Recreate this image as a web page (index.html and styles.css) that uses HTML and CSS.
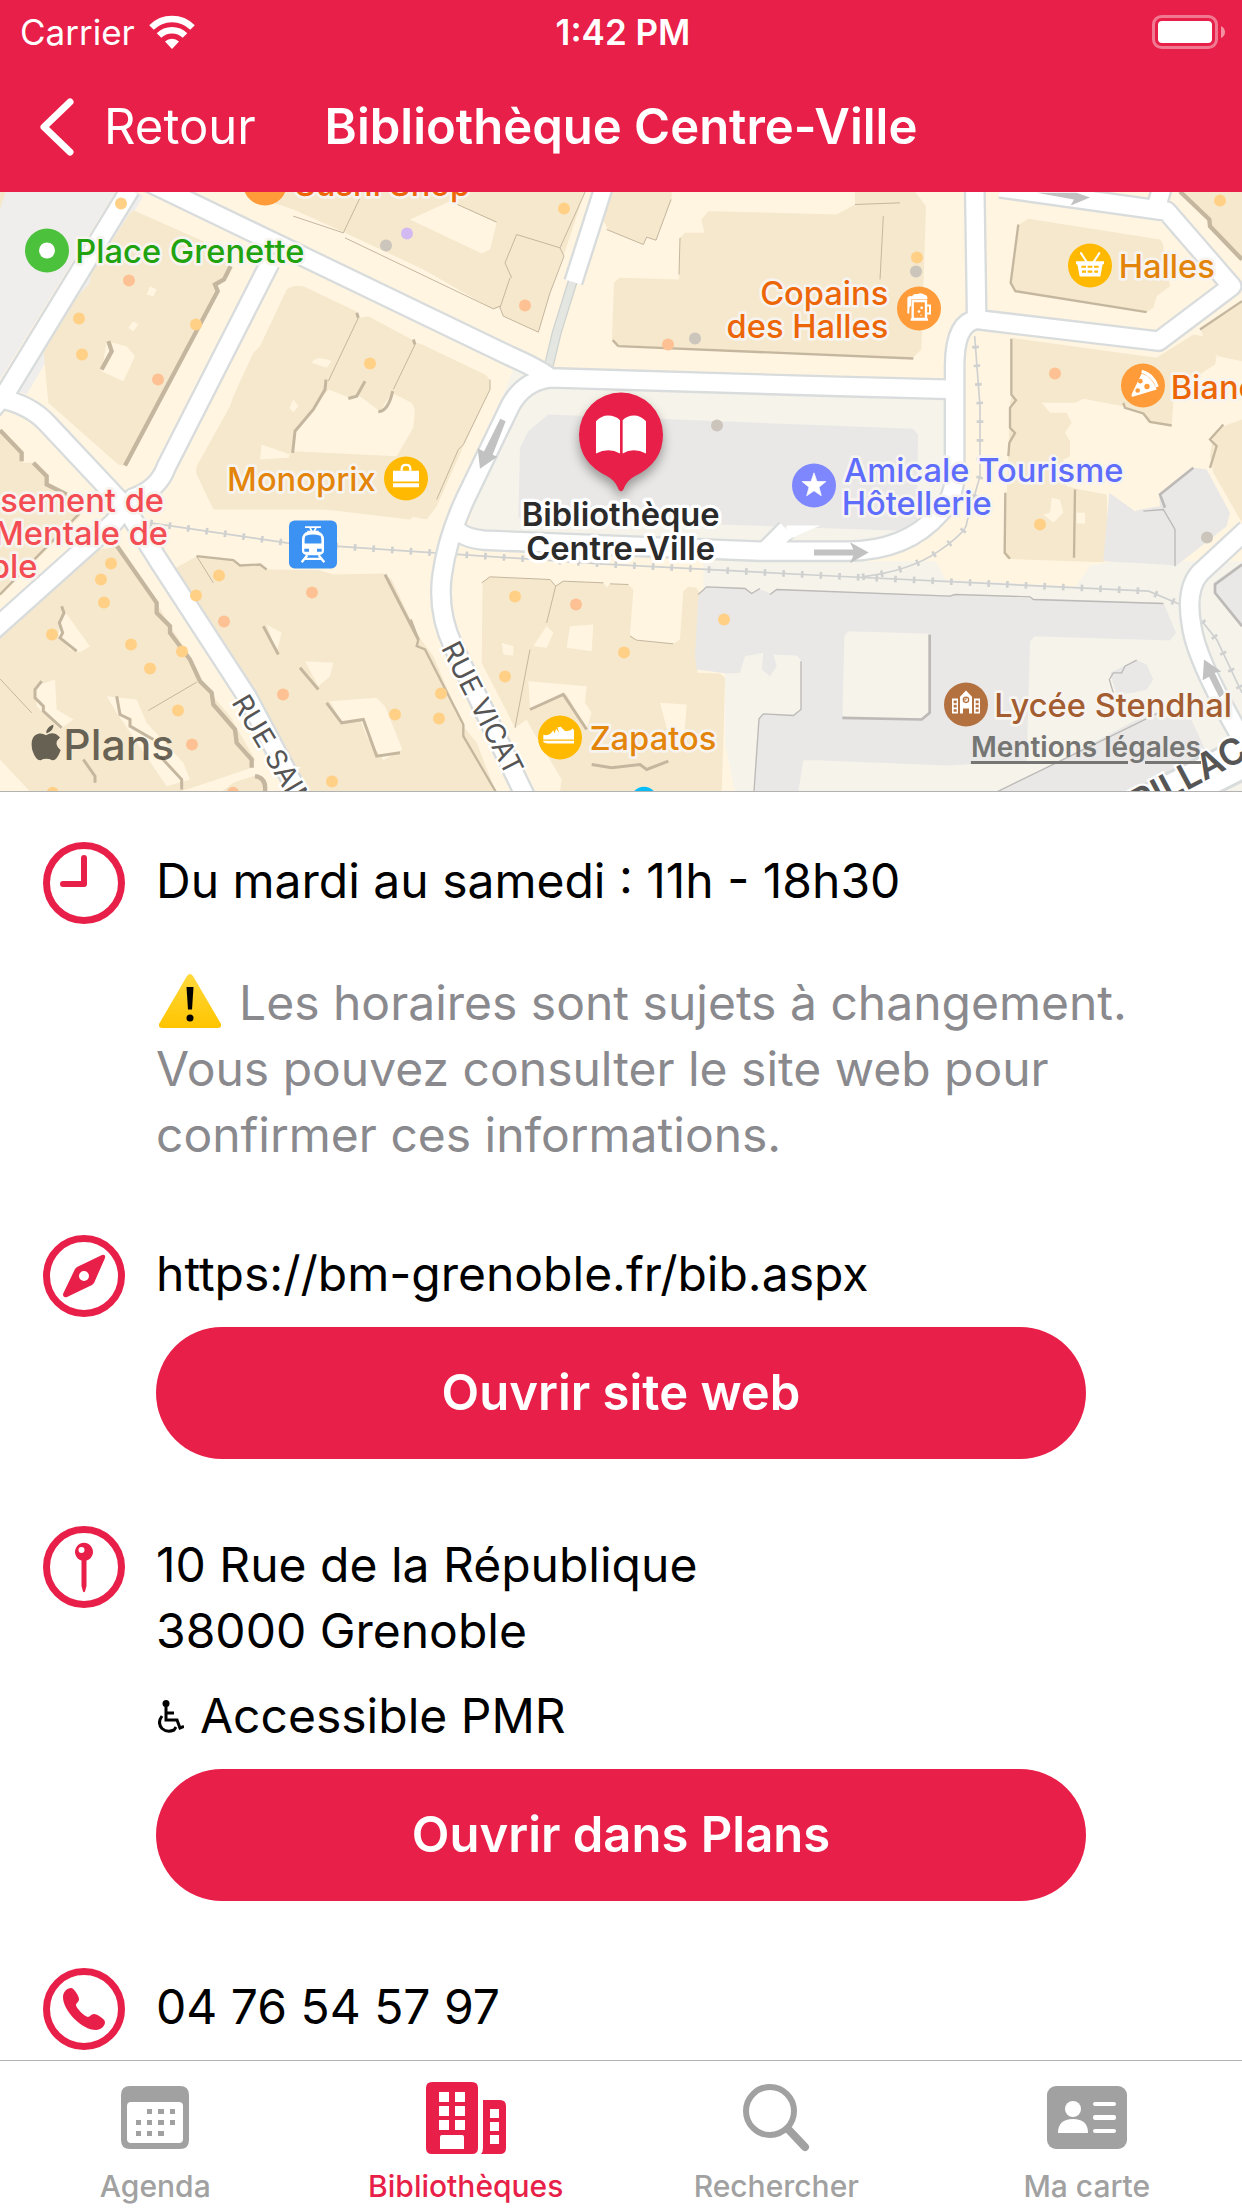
FILE: index.html
```html
<!DOCTYPE html>
<html lang="fr">
<head>
<meta charset="utf-8">
<meta name="viewport" content="width=device-width, initial-scale=1">
<title>Bibliothèque Centre-Ville</title>
<link rel="stylesheet" href="styles.css">
</head>
<body>
<header class="top">
  <div class="status">
    <div class="carrier">Carrier
      <svg class="wifi" viewBox="0 0 46 34" aria-hidden="true"><g fill="none" stroke="#fff" stroke-width="6.5"><path d="M2.500 12.500a29 29 0 0 1 41 0"/><path d="M10 20.500a18.500 18.500 0 0 1 26 0"/></g><path d="M16 26.500a10 10 0 0 1 14 0L23 34z" fill="#fff"/></svg>
    </div>
    <div class="time">1:42 PM</div>
    <svg class="battery" viewBox="0 0 74 34" aria-hidden="true"><rect x="1.500" y="1.500" width="63" height="31" rx="8" fill="none" stroke="#fff" stroke-opacity=".4" stroke-width="3"/><rect x="6" y="6" width="54" height="22" rx="4" fill="#fff"/><path d="M69 11q4 2 4 6t-4 6z" fill="#fff" fill-opacity=".5"/></svg>
  </div>
  <div class="navbar">
    <button class="back" type="button"><svg viewBox="0 0 34 58" aria-hidden="true"><path d="M30 4 4 29l26 25" fill="none" stroke="#fff" stroke-width="7" stroke-linecap="round" stroke-linejoin="round"/></svg>Retour</button>
    <h1>Bibliothèque Centre-Ville</h1>
  </div>
</header>
<main>
  <div class="map">
    <svg class="tiles" viewBox="0 6 3726 1800" preserveAspectRatio="xMidYMid slice" role="img" aria-label="Plan du quartier">
      <rect width="3726" height="1810" fill="#fff5e1"/>
      <!-- squares and campus ground -->
      <path d="M0 0H350L0 570z" fill="#efeeed"/><path d="M0 0H20L0 60z" fill="#f5e8cd"/>
      <path d="M430 20 80 615 40 600 400 0z" fill="#efeeec"/>
      <path d="M1540 540 2836 625V1000L2700 1090 1400 1030 1500 640z" fill="#f5f3ea"/>
      <path d="M2110 1115H3726V1810H2205L2175 1660V1450L2110 1400z" fill="#f5f3ea"/>
      <path d="M2790 1080 2836 1170 3226 1192 3270 1128 3640 1066 3680 1120 3726 1060V600H2870V950z" fill="#fff5e1"/>
      <!-- buildings -->
      <g fill="#f5e8cd">
        <path d="M400 62 610 155 695 230 670 272 645 285 655 305 380 830 355 825 145 640 130 480 165 400 205 370 215 340 270 280 275 235 345 140 390 70z"/>
        <path d="M860 300Q880 285 910 290L1068 365 1080 385 1105 380 1235 450 1245 470 1260 465V900H1230L1120 960H640L588 850 590 830 690 650 700 620 760 490 780 470z"/>
        <path d="M0 720 65 790 70 820 100 820 140 860 145 885 250 940 240 980 0 1220z"/>
        <path d="M820 40 880 60 1035 130 1270 240 1480 360 1500 355 1510 380 1615 428 1650 310 1690 200 1700 170 1756 0H850z"/>
        <path d="M1230 300V460L1260 462 1455 555Q1475 570 1470 600L1390 770 1310 950 1280 990 1230 980z"/>
        <path d="M1820 0H2015V30L1968 152 1940 143 1930 165 1825 122 1812 95z"/>
        <path d="M2125 65 2510 75 2565 45V0H2740L2778 50 2764 480 2736 507 1850 470 1836 450 1842 280 1858 265 2037 270 2040 145 2055 130 2113 130 2104 90z"/>
        <path d="M3085 88 3480 150Q3495 165 3490 200L3510 290 3470 320 3460 355 3440 368 3046 305 3030 285 3058 105z"/>
        <path d="M3540 6 3625 90 3640 120 3726 210V0H3540z"/>
        <path d="M3036 445 3250 475 3470 505 3580 435 3610 440 3650 500 3645 525 3560 580 3520 640 3515 710 3445 700 3430 675 3370 650 3250 628 3225 640 3125 640 3150 670H3200L3215 700 3195 730 3210 755V800L3190 810 3200 890 3240 900 3320 915 3325 1090 3310 1118 3020 1108 3012 1090 3025 800 3030 640 3036 620z"/>
        <path d="M3726 335 3600 415 3620 470 3655 500 3726 515z"/><path d="M3726 690 3670 710 3640 740 3630 800 3640 850 3726 1000z"/>
        <path d="M590 1100 700 1112 720 1125 780 1125 800 1140 960 1142 1000 1155 1150 1152 1175 1170 1255 1340 1300 1400 1390 1610 1430 1660 1487 1806H890L700 1510 510 1145z"/>
        <path d="M350 1070 470 1240 510 1310 550 1370 600 1475 690 1580 730 1650 765 1710 755 1735 590 1790 540 1806H90L0 1710V1330L160 1180 250 1090z"/>
        <path d="M640 920 1230 990 1260 960V830H640L610 900z"/><path d="M700 1780 765 1758 795 1780V1810H660z"/>
        <path d="M1465 1162 1650 1170 1667 1190 1685 1175 1810 1180 1820 1195 1830 1183 1885 1185 1900 1200 1890 1335 1910 1352 2020 1363 2040 1350 2050 1205 2065 1192 2090 1195 2100 1215 2092 1450 2160 1452 2175 1465 2170 1660 2165 1806H1680L1685 1770 1590 1610 1580 1590 1690 1515 1545 1615 1445 1420 1448 1180z"/>
      </g>
      <!-- courtyards -->
      <g fill="#fff5e1">
        <path d="M985 600 1050 625 1080 620 1140 665 1175 610 1235 640 1245 660 1240 715 1190 800 880 785 885 725z"/>
        <path d="M320 455 380 470 405 500 370 575 305 545z"/><path d="M450 290 470 300 460 320 440 315zM400 395 415 405 400 425 385 415zM935 520Q950 495 995 515L980 535zM880 630 895 650 880 668 868 655zM785 765 870 795 865 805 780 810z"/>
        <path d="M1230 90 1350 35 1490 100 1470 180 1445 192z"/>
        <path d="M190 1260 270 1370 240 1388 210 1380 175 1335zM105 1490 165 1470 170 1560 220 1590 180 1620 110 1550zM320 1520 410 1530 440 1600 550 1720 570 1770 500 1790 350 1570z"/>
        <path d="M915 1415 1000 1420 990 1460 955 1490zM990 1535 1130 1525 1155 1550 1207 1680 1150 1712 1100 1640 1080 1590 1025 1600zM800 1305 845 1330 830 1390z"/>
        <path d="M1600 1370 1640 1310 1660 1330 1640 1375zM1710 1310 1780 1305 1775 1385 1700 1375zM1585 1475 1760 1490 1755 1540 1775 1570 1760 1620 1700 1515 1590 1560zM1980 1540 2060 1545 2050 1680 2020 1690zM1505 1360 1540 1370V1398L1510 1395z"/>
        <path d="M3155 925 3180 930 3190 970 3160 1000 3130 975 3150 970zM3230 970H3255V1002H3230z"/>
      </g>
      <!-- campus buildings -->
      <g fill="#e9e8e6">
        <path d="M1645 675 2740 718 2754 735 2750 1025 2600 1020 2300 1010 1555 985 1560 775 1585 725z"/>
        <path d="M2120 1192 2235 1197 2255 1212 2275 1197 2310 1212 2330 1200 3490 1240 3528 1330 3510 1353 3105 1340 3090 1355 3080 1715 2840 1728 2450 1712H2410L2395 1806H2262L2277 1588 2290 1573 2380 1578 2403 1560V1412L2390 1398 2320 1395 2330 1430 2310 1460 2285 1440 2290 1390 2235 1400 2220 1450 2180 1452 2090 1440 2085 1400 2095 1220z"/>
        <path d="M3000 1806 3450 1570 3560 1560 3620 1690 3400 1806z"/>
        <path d="M3726 1120 3640 1180 3650 1215 3726 1310z"/>
        <path d="M3328 910 3405 965 3420 960 3480 950 3478 920 3580 835 3620 840 3690 970 3680 1010 3530 1128 3440 1122 3310 1115z"/>
        <path d="M3330 1450 3370 1430 3410 1412 3440 1425 3460 1470 3440 1500 3400 1510 3350 1515z"/>
      </g>
      <path d="M2545 1325 2790 1333 2788 1575 2765 1590 2527 1585 2533 1340z" fill="#f5f3ea"/>
      <!-- shaded walls -->
      <g fill="none" stroke="#c5b79f" stroke-width="13">
        <path d="M692 230 672 270 645 285 653 305 375 828M325 455 335 485 305 540M0 722 65 790V815M100 820 140 860V885L200 915M350 1068 470 1240V1270L510 1310V1330L570 1410 600 1475 635 1510 640 1545 705 1620 710 1660 755 1710 755 1735M765 1760Q800 1765 795 1806M3540 6 3628 90 3630 110 3726 210"/>
        <path stroke-width="9" d="M978 570 975 600 940 660 885 725 878 790M185 1250 192 1270 178 1300 188 1330 180 1345 230 1385M125 1475 105 1500 105 1525 130 1550V1565L185 1615M350 1520 360 1575 390 1590V1610L460 1650M250 1710 285 1760V1780M480 1700 545 1770V1800M1155 1155 1255 1350M980 1540 1025 1600 1090 1590 1130 1700 1200 1690M900 1435 955 1500M790 1310 835 1395M1590 1560 1690 1515 1760 1620M1775 1725 1835 1735 1920 1725 1940 1740 2005 1715M1095 575 1070 620 1045 627M1178 605Q1165 665 1135 667M1240 450 1245 465M1070 370 1075 385"/>
        <path stroke-width="7" d="M0 1215 240 970M3034 448V615L3048 632 3030 655V715L3045 730 3028 760 3025 800M3016 910 3014 1090 3030 1108M3225 900 3222 1105M3600 420 3726 335M3370 640 3375 655 3430 672 3450 697 3515 708M3670 705 3630 750 3650 770 3630 835M590 1100 700 1112 720 1128 780 1125 800 1140M1855 470 2740 507M1855 470 1838 452M3055 105 3032 280 3046 305 3440 368M1232 1290 1255 1350 1250 1370 1275 1380 1390 1605 1390 1640 1487 1806"/>
        <path stroke-width="3" d="M1350 35 1490 98M880 80 1030 130 1080 25M1035 145 1480 358 1500 350M1530 265 1500 355 1510 380 1615 428 1650 310M1550 135 1515 220 1535 265M1550 135 1680 175 1692 200 1650 310M1680 175 1756 6M1470 570V600L1390 765 1375 780 1310 930M1820 120 1930 165 1940 143 1968 152 2013 30M2040 145 2037 255M2565 45 2700 40M2650 80 2640 270M1445 1180 1470 1162 1650 1170 1667 1190 1640 1300M1667 1190 1690 1175 1810 1180M1830 1183 1885 1185M1890 1340 1910 1352 2020 1363M1545 1615 1590 1380M445 1563 590 1478M0 1468 95 1570M590 1100 640 1180M1075 385 985 575M1245 465 1180 600"/>
      </g>
      <g fill="none" stroke="#bcb9b7" stroke-width="4">
        <path d="M2095 1215 2120 1192 2235 1197 2255 1212 2280 1197M2310 1215 2330 1200 2850 1220 2865 1215 3090 1222 3100 1230 3490 1242M2262 1806 2277 1588 2290 1573 2380 1578 2403 1560V1415"/>
        <path stroke-width="8" d="M2789 1335V1570L2765 1590 2527 1585M3726 1125 3645 1185V1210L3726 1310M3580 835 3480 915 3495 955"/><path d="M2985 1810 3480 1568M3525 1130V1020L3490 960 3430 965M3340 1510 3328 1470 3340 1450 3365 1450 3375 1430 3410 1412"/>
      </g>
      <!-- tram rails -->
      <g fill="none" stroke="#cfd0d0">
        <g stroke-width="5"><path id="rail" d="M450 1000 860 1060 1260 1087 1800 1123 2466 1158 3446 1205 3541 1245"/><path id="spur" d="M2586 1162Q2730 1145 2816 1085T2900 1000L2940 860V650L2924 440"/><path id="east" d="M3606 1295 3650 1350 3726 1510"/></g>
        <g stroke-width="20" stroke-dasharray="8 48"><use href="#rail"/><use href="#spur"/><use href="#east"/></g>
      </g>
      <!-- streets -->
      <defs>
        <g id="streets" fill="none" stroke-linejoin="round">
          <path d="M390 0 15 615-60 700M-40 620Q80 635 140 700L370 945 480 1120 740 1520 905 1830M810 220 500 830Q475 900 400 925L340 1000-40 1340M430-30 1530 500Q1620 540 1650 565L2490 590 2870 600M1650 565Q1570 575 1530 650L1395 930Q1340 1050 1326 1160T1360 1370L1590 1850M1370 1020Q1390 1045 1450 1052L2280 1085H2540Q2720 1085 2820 970 2864 920 2864 860V530Q2864 400 2930 390M2924-20 2930 390 3476 455 3695 290 3500 65 3000-5M3470 50 3490-20"/>
          <path d="M3740 1020 3600 1150Q3555 1200 3575 1310 3590 1420 3750 1690M2300 1080 2360 1020"/>
        </g>
      </defs>
      <path d="M1720 270 1670 430 1645 535" fill="none" stroke="#d0d4d0" stroke-width="30"/><path d="M1720 270 1670 430 1645 535" fill="none" stroke="#e3e6e1" stroke-width="22"/>
      <path d="M1812-10 1720 278" stroke="#d9dcdc" stroke-width="62"/>
      <use href="#streets" stroke="#d9dcdc" stroke-width="66"/>
      <path d="M3780 1680 3300 1920" stroke="#d9dcdc" stroke-width="130"/>
      <path d="M1812-10 1720 278" stroke="#fff" stroke-width="48"/>
      <use href="#streets" stroke="#fff" stroke-width="52"/>
      <path d="M3780 1680 3300 1920" stroke="#fff" stroke-width="112"/>
      <path d="M2360 1020V1008H2460L2360 1052z" fill="#fff"/>
      <g fill="#c2c2c2"><path d="M1501 688 1517 695 1478 796 1492 802 1440 838 1433 776 1452 786z"/><path d="M2442 1080H2560L2550 1058 2606 1089 2550 1121 2560 1098H2442z"/><path d="M3110 10H3230L3270 24 3212 48 3222 30z"/><path d="M3612 1410 3664 1446 3644 1450 3674 1512 3658 1524 3627 1462 3608 1472z"/></g>
      <!-- minor places -->
      <g fill="#ffd086"><circle cx="363" cy="42" r="18"/><circle cx="237" cy="387" r="18"/><circle cx="246" cy="495" r="18"/><circle cx="588" cy="405" r="18"/><circle cx="1110" cy="522" r="18"/><circle cx="1692" cy="57" r="18"/><circle cx="2751" cy="204" r="18"/><circle cx="3660" cy="33" r="18"/><circle cx="333" cy="1122" r="18"/><circle cx="303" cy="1170" r="18"/><circle cx="312" cy="1239" r="18"/><circle cx="156" cy="1335" r="18"/><circle cx="393" cy="1365" r="18"/><circle cx="546" cy="1386" r="18"/><circle cx="450" cy="1437" r="18"/><circle cx="534" cy="1563" r="18"/><circle cx="657" cy="1158" r="18"/><circle cx="588" cy="1218" r="18"/><circle cx="1185" cy="1575" r="18"/><circle cx="996" cy="1776" r="18"/><circle cx="158" cy="1810" r="18"/><circle cx="1545" cy="1221" r="18"/><circle cx="1515" cy="1461" r="18"/><circle cx="1872" cy="1389" r="18"/><circle cx="2172" cy="1290" r="18"/><circle cx="1323" cy="1512" r="18"/><circle cx="1317" cy="1587" r="18"/><circle cx="3120" cy="1005" r="18"/></g>
      <g fill="#fdc193"><circle cx="387" cy="273" r="18"/><circle cx="474" cy="570" r="18"/><circle cx="1575" cy="348" r="18"/><circle cx="2004" cy="465" r="18"/><circle cx="3165" cy="552" r="18"/><circle cx="936" cy="1209" r="18"/><circle cx="672" cy="1296" r="18"/><circle cx="849" cy="1515" r="18"/><circle cx="576" cy="1665" r="18"/><circle cx="699" cy="1810" r="18"/><circle cx="1728" cy="1245" r="18"/></g>
      <g fill="#cbc5bc"><circle cx="1158" cy="168" r="18"/><circle cx="2085" cy="447" r="18"/><circle cx="2748" cy="246" r="18"/><circle cx="2151" cy="708" r="18"/><circle cx="3621" cy="1044" r="18"/></g>
      <circle cx="1221" cy="132" r="18" fill="#d3b9f2"/><circle cx="1932" cy="1832" r="40" fill="#06bdf8"/>
      <!-- street names -->
      <g class="street"><text transform="translate(693 1538) rotate(59)">RUE SAINT</text><text transform="translate(1322 1375) rotate(63)">RUE VICAT</text><text class="major" transform="translate(3416 1880) rotate(-28)">RILLAC</text></g>
      <!-- named places -->
      <g class="place">
        <circle cx="141" cy="183" r="66" fill="#4bc13c"/><circle cx="141" cy="183" r="24" fill="#fff"/>
        <text x="226" y="220" fill="#21a30f">Place Grenette</text>
        <circle cx="795" cy="-18" r="66" fill="#ff9b38"/><text x="884" y="20" fill="#ec6608">Sushi Shop</text>
        <text class="end" x="1127" y="903" fill="#e3840b">Monoprix</text>
        <circle cx="1218" cy="867" r="66" fill="#ffb900"/><path d="M1179 844H1257V876H1179zM1179 881H1257V893H1179z" fill="#fff"/><path d="M1205 844v-6q0-12 13-12t13 12v6" fill="none" stroke="#fff" stroke-width="7"/>
        <text class="end" x="2665" y="347" fill="#ec6608">Copains</text><text class="end" x="2665" y="446" fill="#ec6608">des Halles</text>
        <circle cx="2757" cy="357" r="66" fill="#ff9b38"/>
        <path d="M2738 335H2778V388H2738z" fill="none" stroke="#fff" stroke-width="7"/><path d="M2781 348h9v24h-9" fill="none" stroke="#fff" stroke-width="6"/><path d="M2722 372V328Q2722 318 2736 320 2740 312 2752 314 2764 308 2774 316 2784 318 2782 330H2733V350Q2727 348 2728 372zM2732 387H2784V394H2732z" fill="#fff"/><g fill="#fff"><circle cx="2765" cy="355" r="4"/><circle cx="2757" cy="366" r="4"/><circle cx="2763" cy="377" r="2"/></g>
        <circle cx="3270" cy="228" r="66" fill="#ffb900"/><path d="M3228 215H3312V224H3308L3301 261H3239L3232 224H3228z" fill="#fff"/><path d="M3243 191 3260 217M3298 191 3281 217" stroke="#fff" stroke-width="6" stroke-linecap="round"/><path d="M3244 229h14v6h-14zm19 0h14v6h-14zm19 0h14v6h-14zm-36 14h12v7h-12zm17 0h14v7h-14zm20 0h11v7h-11z" fill="#ffb900"/>
        <text x="3356" y="265" fill="#e3840b">Halles</text>
        <circle cx="3429" cy="588" r="66" fill="#ff9b38"/><path d="M3425 552Q3456 562 3470 600L3398 622Q3392 622 3396 612zM3426 541Q3464 551 3476 590L3468 594Q3457 562 3424 550z" fill="#fff"/><g fill="#ff9b38"><circle cx="3413" cy="603" r="7"/><circle cx="3441" cy="591" r="8"/><circle cx="3421" cy="575" r="7"/></g>
        <text x="3512" y="628" fill="#ec6608">Bianco</text>
        <circle cx="2442" cy="888" r="66" fill="#7e87fe"/><path d="m2442 850 9 26h27l-21 17 7 26-22-15-22 15 7-26-21-17h27z" fill="#fff" stroke="#fff" stroke-width="2"/>
        <text x="2532" y="878" fill="#5f6dfd">Amicale Tourisme</text><text x="2525" y="977" fill="#5f6dfd">Hôtellerie</text>
        <text class="end" x="492" y="967" fill="#f34d53">sement de</text><text class="end" x="504" y="1066" fill="#f34d53">Mentale de</text><text class="end" x="112" y="1165" fill="#f34d53">ble</text>
        <rect x="867" y="993" width="144" height="144" rx="17" fill="#3b92f2"/><path d="M915 1013h48M922 1026h34M930 1015l6 11M948 1015l-6 11" stroke="#fff" stroke-width="5"/><path d="M925 1025H953Q972 1030 972 1050V1083Q972 1096 955 1097H923Q906 1096 906 1083V1050Q906 1030 925 1025zM917 1039Q913 1044 914 1062H964Q965 1044 961 1039 939 1031 917 1039zM913 1078v9h14v-9zm38 0v9h14v-9z" fill="#fff" fill-rule="evenodd"/><path d="M922 1097 905 1118M956 1097 973 1118M916 1108H962" stroke="#fff" stroke-width="7"/>
        <text x="1769" y="1680" fill="#e3840b">Zapatos</text><circle cx="1680" cy="1644" r="66" fill="#ffb900"/><path d="M1630 1636Q1642 1640 1652 1632L1660 1622 1664 1632 1668 1618 1678 1630 1672 1614 1682 1612 1694 1624Q1712 1626 1718 1616L1722 1622V1650H1630zM1629 1654H1722V1662H1645Q1630 1662 1629 1654z" fill="#fff"/>
        <text x="2983" y="1582" fill="#a35d31">Lycée Stendhal</text><circle cx="2898" cy="1545" r="66" fill="#b47140"/><path d="M2856 1527H2874V1572H2856zM2922 1527H2940V1572H2922zM2880 1572V1522L2898 1503 2916 1522V1572H2907V1557H2889V1572z" fill="#fff"/><path d="M2861 1533h9v8h-9zm0 13h9v8h-9zm0 13h9v8h-9zM2927 1533h9v8h-9zm0 13h9v8h-9zm0 13h9v8h-9z" fill="#b47140"/><circle cx="2898" cy="1531" r="8" fill="#fff" stroke="#b47140" stroke-width="4"/><path d="M2898 1525v6h-6" fill="none" stroke="#b47140" stroke-width="3"/>
      </g>
      <!-- selected library -->
      <g class="library">
        <path class="pin" d="M1863 905Q1857 905 1853 893 1844 872 1822 860 1737 820 1737 735A126 126 0 0 1 1989 735Q1989 820 1904 860 1882 872 1873 893 1869 905 1863 905z" fill="#e81f48"/>
        <path d="M1788 695Q1804 678 1824 678 1846 678 1860 692V792Q1826 772 1788 792zM1938 695Q1922 678 1902 678 1882 678 1868 692V792Q1900 772 1938 792z" fill="#fff"/>
        <text x="1862" y="1010">Bibliothèque</text><text x="1862" y="1110">Centre-Ville</text>
      </g>
      <g class="brand"><path d="M160 705Q163 722 139 732 137 714 160 705zM138 737Q162 722 180 744 158 762 182 782 170 814 157 812 138 804 122 812 108 814 97 782 88 738 118 732 128 731 138 737z" transform="translate(0 900)"/><text x="190" y="1710">Plans</text></g>
    </svg>
    <a class="legal" href="#mentions">Mentions légales</a>
  </div>
  <div class="details">
    <section class="row">
      <svg class="badge" viewBox="0 0 82 82" aria-hidden="true"><circle cx="41" cy="41" r="37.500"/><path d="M41 16V42H20" stroke-width="6"/></svg>
      <div class="info">
        <p>Du mardi au samedi : 11h - 18h30</p>
        <p class="note"><svg class="warn" viewBox="0 0 62 54" role="img" aria-label="Attention"><defs><linearGradient id="w" x2="0" y2="1"><stop stop-color="#ffd93b"/><stop offset="1" stop-color="#ffc400"/></linearGradient></defs><path d="M28 2q3-4 6 0l28 48q1 4-3 4H3q-4 0-3-4z" fill="url(#w)"/><path d="M27.500 13h7L33 35.500h-4z"/><circle cx="31" cy="44" r="3.500"/></svg>Les horaires sont sujets à changement. Vous pouvez consulter le site web pour confirmer ces informations.</p>
      </div>
    </section>
    <section class="row">
      <svg class="badge" viewBox="0 0 82 82" aria-hidden="true"><circle cx="41" cy="41" r="37.500"/><path class="solid" fill-rule="evenodd" d="M59 20q4-1 3 3L51 48 49 50 24 62q-4 1-4-3L32 34 34 32zM41 36a5 5 0 1 0 0 10 5 5 0 0 0 0-10z"/></svg>
      <div class="info">
        <p>https://bm-grenoble.fr/bib.aspx</p>
        <button class="action" type="button">Ouvrir site web</button>
      </div>
    </section>
    <section class="row">
      <svg class="badge" viewBox="0 0 82 82" aria-hidden="true"><circle cx="41" cy="41" r="37.500"/><path class="solid" fill-rule="evenodd" d="M38.500 34.500A9 9 0 1 1 43.500 34.500V60L42 65.500Q41 67 40 65.500L38.500 60zM38.500 21a3 3 0 1 0 0 6 3 3 0 0 0 0-6z"/></svg>
      <div class="info">
        <p>10 Rue de la République<br>38000 Grenoble</p>
        <p class="access"><svg class="chair" viewBox="0 0 26 33" aria-hidden="true"><circle cx="8" cy="3.500" r="3.500"/><g fill="none" stroke="#000" stroke-width="3"><path d="M8 6V20H19L22 28 26 26.500M8 13H16"/><path d="M4 16Q-1 23 4 28.500 9 33 16 30L18 27"/></g></svg>Accessible PMR</p>
        <button class="action" type="button">Ouvrir dans Plans</button>
      </div>
    </section>
    <section class="row">
      <svg class="badge" viewBox="0 0 82 82" aria-hidden="true"><circle cx="41" cy="41" r="37.500"/><path class="solid" d="M28 20C31 20 36 28 36 31 36 34 33 35 33 37 33 40 42 49 45 49 47 49 48 46 51 46 54 46 62 51 62 54 62 58 58 62 53 62 39 62 20 43 20 29 20 24 24 20 28 20z"/></svg>
      <div class="info"><p>04 76 54 57 97</p></div>
    </section>
  </div>
</main>
<nav class="tabs">
  <a href="#agenda"><svg viewBox="0 0 80 74" aria-hidden="true"><path fill-rule="evenodd" d="M15 5H65Q74 5 74 14V59Q74 68 65 68H15Q6 68 6 59V14Q6 5 15 5zM16 21Q12 21 12 25V58Q12 62 16 62H64Q68 62 68 58V25Q68 21 64 21z"/><path d="M32 28h5v5h-5zm11 0h6v5h-6zm12 0h5v5h-5zM21 39h5v5h-5zm11 0h5v5h-5zm11 0h6v5h-6zm12 0h5v5h-5zM21 50h5v5h-5zm11 0h5v5h-5zm11 0h6v5h-6z"/></svg>Agenda</a>
  <a class="active" href="#bibliotheques" aria-current="page"><svg viewBox="0 0 80 74" aria-hidden="true"><path fill-rule="evenodd" d="M6 1H46Q52 1 52 7V67Q52 73 46 73H6Q0 73 0 67V7Q0 1 6 1zM13 11V21H23V11zM29 11V21H39V11zM13 25V35H23V25zM29 25V35H39V25zM13 39V49H23V39zM29 39V49H39V39zM16 54Q14 54 14 56V68H38V56Q38 54 36 54zM57 19H74Q80 19 80 25V67Q80 73 74 73H55Q57 71 57 67zM64 28V37H73V28zM64 41V50H73V41zM64 54V63H73V54z"/></svg>Bibliothèques</a>
  <a href="#rechercher"><svg viewBox="0 0 80 74" aria-hidden="true"><g fill="none" stroke="currentColor" stroke-linecap="round"><circle cx="34" cy="30" r="24" stroke-width="6"/><path d="M52 48 69 66" stroke-width="8"/></g></svg>Rechercher</a>
  <a href="#carte"><svg viewBox="0 0 80 74" aria-hidden="true"><rect y="5" width="80" height="63" rx="9"/><g fill="#fff"><circle cx="26" cy="28" r="8"/><path d="M11 52Q11 38 26 38T41 52z"/><rect x="46" y="21" width="23" height="4" rx="2"/><rect x="46" y="34" width="23" height="5" rx="2"/><rect x="46" y="48" width="23" height="4" rx="2"/></g></svg>Ma carte</a>
</nav>
</body>
</html>
```
FILE: styles.css
```css
* {
  box-sizing: border-box;
}

body {
  margin: 0;
  height: 100vh;
  display: flex;
  flex-direction: column;
  background: #fff;
  color: #000;
  font-family: Inter, "Liberation Sans", sans-serif;
  font-size: 48px;
  line-height: 66px;
}

h1, p {
  margin: 0;
}

button {
  border: 0;
  font: inherit;
  color: #fff;
}

.top {
  flex: none;
  background: #e81f48;
  color: #fff;
}

.status {
  display: grid;
  grid-template-columns: 1fr auto 1fr;
  align-items: center;
  height: 60px;
  padding: 4px 16px 0 20px;
  font-size: 35px;
  line-height: 44px;
}

.carrier {
  display: flex;
  align-items: center;
  gap: 14px;
}

.wifi {
  width: 46px;
  height: 34px;
}

.time {
  font-weight: 600;
}

.battery {
  width: 74px;
  height: 34px;
  justify-self: end;
}

.navbar {
  display: grid;
  grid-template-columns: 1fr auto 1fr;
  align-items: center;
  height: 132px;
  padding: 2px 40px 0;
}

.back {
  display: flex;
  align-items: center;
  justify-self: start;
  gap: 30px;
  padding: 0;
  background: none;
}

.back svg {
  width: 34px;
  height: 58px;
}

.back, h1, .action {
  font-size: 49px;
}

h1 {
  font-weight: 600;
  line-height: 66px;
}

main {
  flex: 1;
  min-height: 0;
  overflow-y: auto;
}

.map {
  position: relative;
  height: 600px;
  border-bottom: 1px solid #b2b2b2;
}

.tiles {
  display: block;
  width: 100%;
  height: 100%;
}

.place text {
  font-size: 98px;
  font-weight: 500;
  stroke: #f7f4f0;
  stroke-width: 16px;
  stroke-linejoin: round;
  paint-order: stroke;
}

.place .end {
  text-anchor: end;
}

.street text {
  font-size: 84px;
  fill: #555;
  stroke: #fff;
  stroke-width: 14px;
  paint-order: stroke;
}

.street .major {
  font-size: 108px;
  font-weight: 600;
}

.library text {
  font-size: 98px;
  font-weight: 600;
  text-anchor: middle;
  fill: #2b2b2b;
  stroke: #fff;
  stroke-width: 20px;
  stroke-linejoin: round;
  paint-order: stroke;
}

.pin {
  filter: drop-shadow(0 18px 16px rgb(0 0 0 / 35%));
}

.brand {
  fill: #3a362d;
  fill-opacity: .76;
}

.brand text {
  font-size: 128px;
  font-weight: 500;
}

.legal {
  position: absolute;
  right: 41px;
  bottom: 26px;
  color: #757573;
  font-size: 28px;
  font-weight: 600;
  line-height: 36px;
  text-decoration-thickness: 3px;
  text-underline-offset: 4px;
}

.details {
  display: flex;
  flex-direction: column;
  gap: 67px;
  padding: 50px 156px 0 43px;
}

.row {
  display: grid;
  grid-template-columns: 82px 1fr;
  column-gap: 31px;
}

.badge {
  width: 82px;
  height: 82px;
  fill: none;
  stroke: #e81f48;
  stroke-width: 7;
  stroke-linecap: round;
  stroke-linejoin: round;
}

.badge .solid {
  fill: #e81f48;
  stroke: none;
}

.info {
  min-width: 0;
  padding-top: 6px;
}

.note {
  margin: 56px -80px 0 0;
  color: #8a8a8e;
}

.warn {
  width: 62px;
  height: 54px;
  margin: 0 18px -8px 3px;
  fill: #000;
}

.access {
  margin-top: 19px;
}

.chair {
  width: 26px;
  height: 33px;
  margin: 0 16px 0 2px;
  fill: #000;
}

.action {
  display: block;
  width: 100%;
  height: 132px;
  margin-top: 20px;
  border-radius: 66px;
  background: #e81f48;
  font-weight: 600;
}

.tabs {
  flex: none;
  display: flex;
  height: 148px;
  padding-top: 20px;
  border-top: 1px solid #b2b2b2;
}

.tabs a {
  flex: 1;
  display: flex;
  flex-direction: column;
  align-items: center;
  gap: 12px;
  color: #a1a1a1;
  font-size: 30px;
  font-weight: 500;
  line-height: 38px;
  text-decoration: none;
}

.tabs svg {
  width: 80px;
  height: 74px;
  fill: currentColor;
}

.tabs .active {
  color: #e81f48;
}
```
